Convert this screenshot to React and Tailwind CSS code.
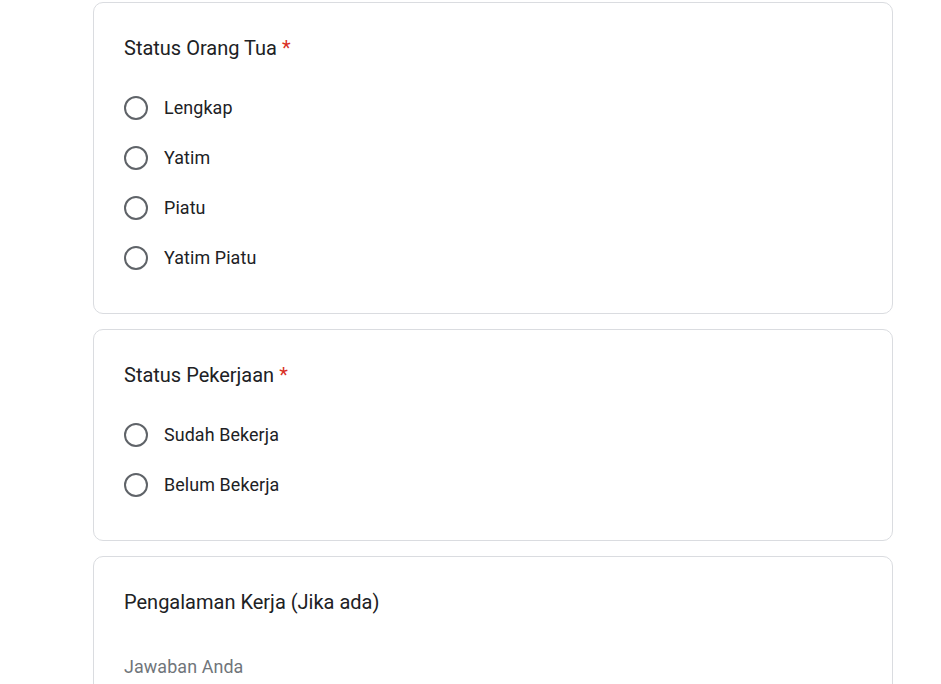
import React from 'react';

const questions = [
  { title: 'Status Orang Tua', required: true, options: ['Lengkap', 'Yatim', 'Piatu', 'Yatim Piatu'] },
  { title: 'Status Pekerjaan', required: true, options: ['Sudah Bekerja', 'Belum Bekerja'] },
];

function Radio({ label }) {
  return (
    <div className="flex h-[50px] items-center gap-4">
      <span className="h-[24px] w-[24px] shrink-0 rounded-full border-[2.4px] border-[#5f6368]" />
      <span className="text-[17.9px] tracking-[0.1px] text-[#202124]">{label}</span>
    </div>
  );
}

export default function App() {
  return (
    <div className="min-h-screen bg-white pt-[2px]" style={{ fontFamily: 'Roboto, "Noto Sans", sans-serif' }}>
      <div className="ml-[93px] flex w-[800px] flex-col gap-[15px]">
        {questions.map((q) => (
          <div key={q.title} className="rounded-[10px] border border-[#dadce0] bg-white px-[30px] pb-[30px] pt-[31px]">
            <div className="h-[28px] text-[20px] leading-[28px] text-[#202124]">
              {q.title}
              {q.required && <span className="ml-[5px] text-[#d93025]">*</span>}
            </div>
            <div className="mt-[21px] flex flex-col">
              {q.options.map((o) => (
                <Radio key={o} label={o} />
              ))}
            </div>
          </div>
        ))}

        <div className="rounded-[10px] border border-[#dadce0] bg-white px-[30px] pb-[30px] pt-[31px]">
          <div className="h-[28px] text-[20px] leading-[28px] text-[#202124]">Pengalaman Kerja (Jika ada)</div>
          <div className="mt-[37px] w-1/2 border-b border-[#dadce0] pb-[8px]">
            <div className="h-[28px] text-[17.9px] tracking-[0.1px] leading-[28px] text-[#70757a]">Jawaban Anda</div>
          </div>
        </div>
      </div>
    </div>
  );
}
